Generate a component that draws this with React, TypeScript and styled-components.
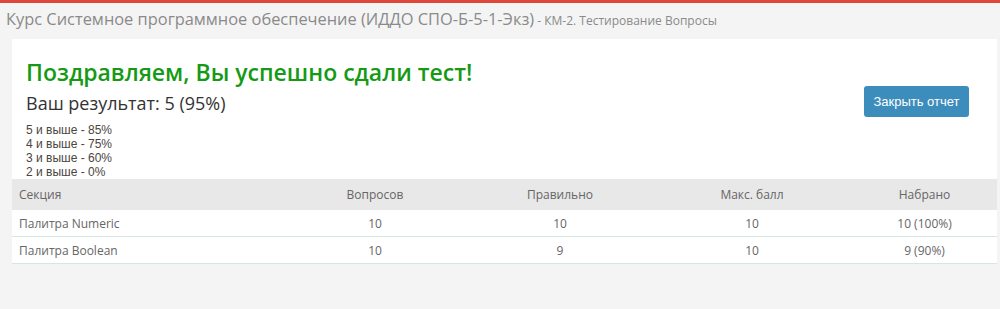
import styled, { createGlobalStyle } from "styled-components";

const GlobalStyle = createGlobalStyle`
  html, body {
    margin: 0;
    padding: 0;
    background: #f4f4f4;
  }
`;

interface Row {
  section: string;
  questions: number;
  correct: number;
  max: number;
  scored: string;
}

const rows: Row[] = [
  { section: "Палитра Numeric", questions: 10, correct: 10, max: 10, scored: "10 (100%)" },
  { section: "Палитра Boolean", questions: 10, correct: 9, max: 10, scored: "9 (90%)" },
];

const grades = ["5 и выше - 85%", "4 и выше - 75%", "3 и выше - 60%", "2 и выше - 0%"];

export default function App() {
  return (
    <>
      <GlobalStyle />
      <Page>
        <TopLine />
        <Title>
          Курс Системное программное обеспечение (ИДДО СПО-Б-5-1-Экз)
          <small> - КМ-2. Тестирование Вопросы</small>
        </Title>
        <Card>
          <Summary>
            <div>
              <Congrats>Поздравляем, Вы успешно сдали тест!</Congrats>
              <Result>Ваш результат: 5 (95%)</Result>
              <Grades>
                {grades.map((g) => (
                  <div key={g}>{g}</div>
                ))}
              </Grades>
            </div>
            <CloseBtn>Закрыть отчет</CloseBtn>
          </Summary>
          <Table>
            <HeadRow>
              <Cell>Секция</Cell>
              <Cell $center>Вопросов</Cell>
              <Cell $center>Правильно</Cell>
              <Cell $center>Макс. балл</Cell>
              <Cell $center>Набрано</Cell>
            </HeadRow>
            {rows.map((r) => (
              <BodyRow key={r.section}>
                <Cell>{r.section}</Cell>
                <Cell $center>{r.questions}</Cell>
                <Cell $center>{r.correct}</Cell>
                <Cell $center>{r.max}</Cell>
                <Cell $center>{r.scored}</Cell>
              </BodyRow>
            ))}
          </Table>
        </Card>
      </Page>
    </>
  );
}

const Page = styled.div`
  min-height: 309px;
  background: #f4f4f4;
  font-family: "Open Sans", "Liberation Sans", sans-serif;
`;

const TopLine = styled.div`
  height: 3px;
  background: #e0473a;
`;

const Title = styled.div`
  padding: 4px 0 0 6px;
  height: 31px;
  box-sizing: border-box;
  font-size: 16.4px;
  color: #8a8a8a;
  white-space: nowrap;

  small {
    font-size: 12px;
  }
`;

const Card = styled.div`
  margin: 5px 3px 0 12px;
  background: #fff;
`;

const Summary = styled.div`
  display: flex;
  justify-content: space-between;
  align-items: flex-start;
  padding: 16px 28px 0 14px;
  height: 140px;
  box-sizing: border-box;
`;

const Congrats = styled.div`
  font-size: 23px;
  font-weight: 600;
  color: #159a15;
  line-height: 34px;
`;

const Result = styled.div`
  font-size: 18px;
  color: #333;
  line-height: 26px;
  margin-top: 1px;
`;

const Grades = styled.div`
  margin-top: 7px;
  font-family: "Liberation Sans", Arial, sans-serif;
  font-size: 12px;
  line-height: 14px;
  color: #4a4540;
`;

const CloseBtn = styled.button`
  margin-top: 31px;
  width: 105px;
  height: 31px;
  border: none;
  border-radius: 3px;
  background: #3c8dbc;
  color: #fff;
  font-family: "Liberation Sans", Arial, sans-serif;
  font-size: 13px;
  cursor: pointer;
`;

const Table = styled.div`
  font-size: 12px;
  color: #666;
`;

const HeadRow = styled.div`
  display: grid;
  grid-template-columns: 270px 186px 184px 200px 1fr;
  height: 31px;
  align-items: center;
  background: #e8e8e8;
`;

const BodyRow = styled(HeadRow)`
  box-sizing: border-box;
  height: 27px;
  background: #fff;
  border-bottom: 1px solid #d6e6e0;
`;

const Cell = styled.div<{ $center?: boolean }>`
  padding-left: ${(p) => (p.$center ? "0" : "7px")};
  text-align: ${(p) => (p.$center ? "center" : "left")};
`;
